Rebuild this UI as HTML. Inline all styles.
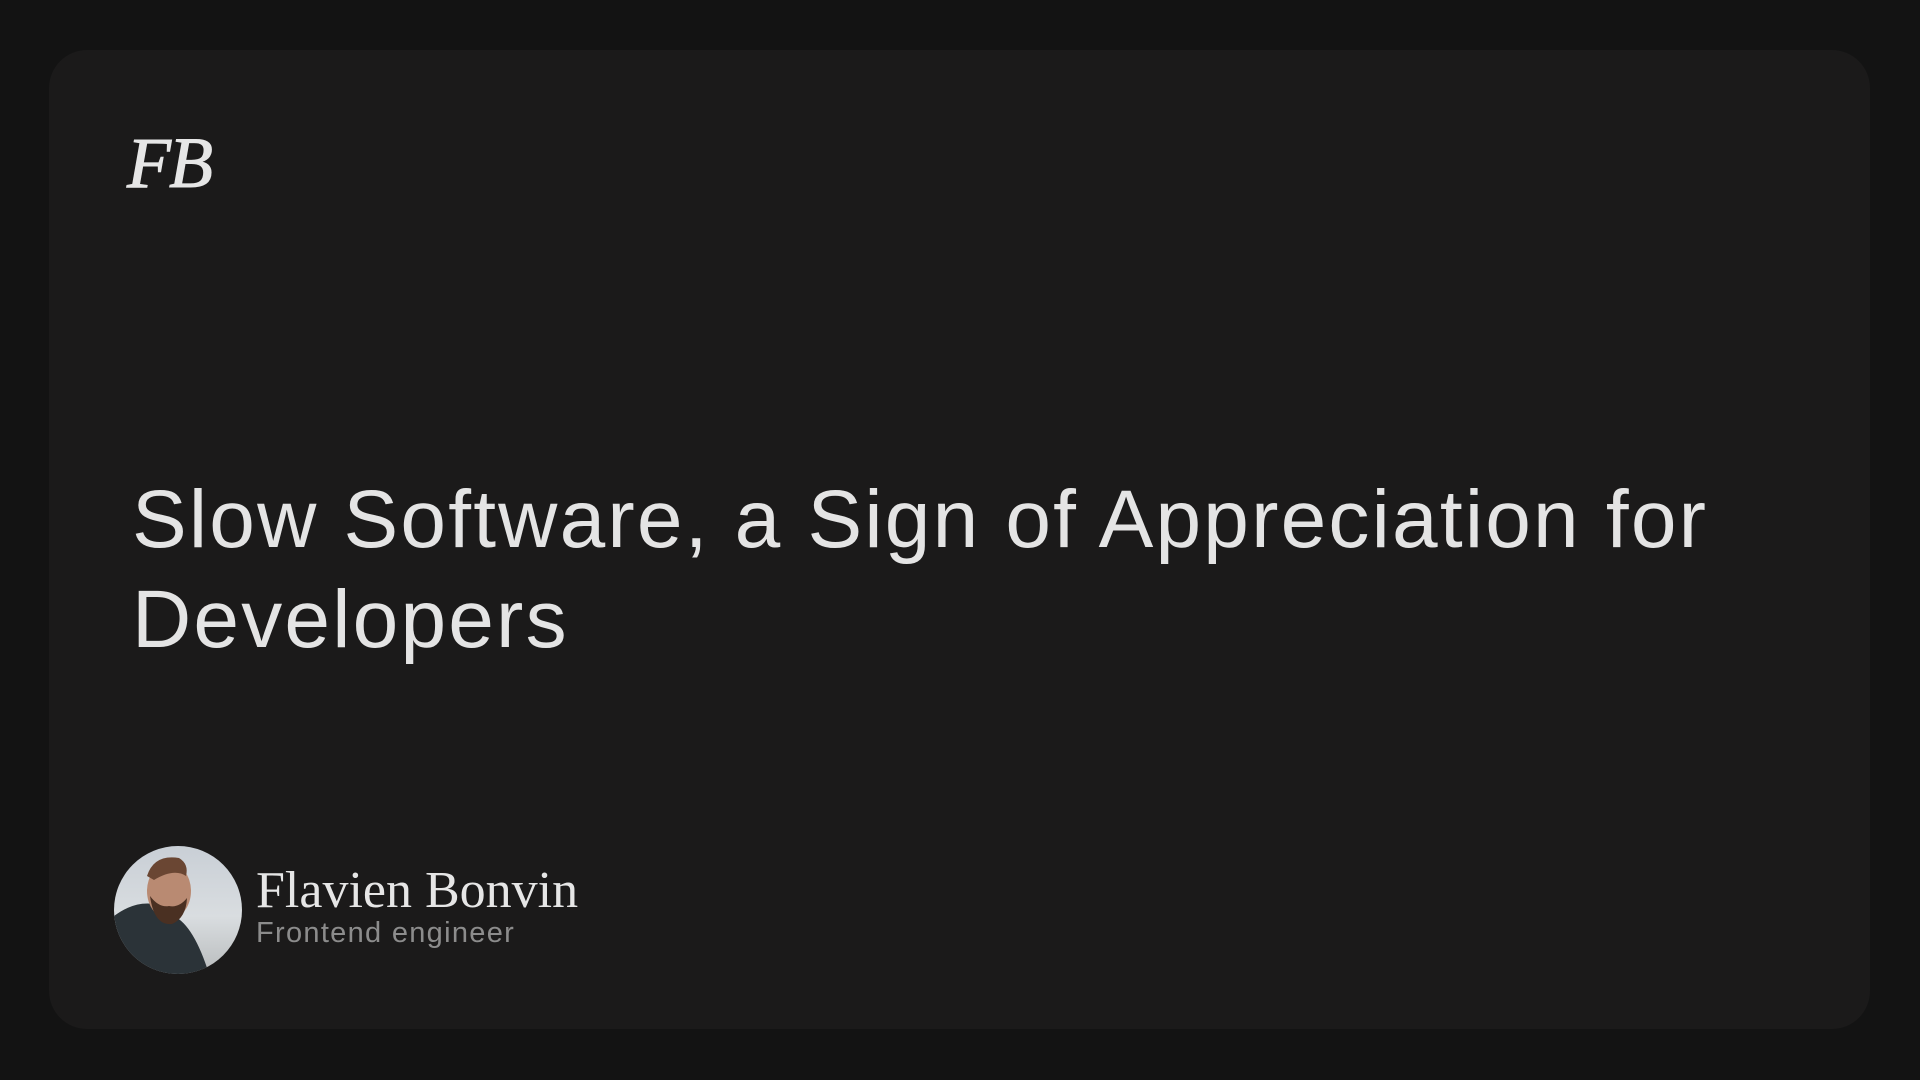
<!DOCTYPE html>
<html><head><meta charset="utf-8"><style>
html,body{margin:0;padding:0;width:1920px;height:1080px;background:#131313;overflow:hidden}
.card{position:absolute;left:49px;top:50px;width:1821px;height:979px;border-radius:38px;background:#1b1a1a}
.fb{position:absolute;left:127px;top:127px;font-family:"Liberation Serif",serif;font-style:italic;font-size:72px;color:#e6e6e6;line-height:1;letter-spacing:-2px;-webkit-text-stroke:1px #e6e6e6}
.title{position:absolute;left:132px;top:470px;width:1780px;font-family:"Liberation Sans",sans-serif;font-size:82px;line-height:100px;color:#e4e4e4;letter-spacing:2.2px}
.av{position:absolute;left:114px;top:846px;width:128px;height:128px;border-radius:50%;overflow:hidden;background:linear-gradient(180deg,#c9cfd6 0%,#d9dde0 55%,#b9bcbd 100%)}
.name{position:absolute;left:256px;top:862px;font-family:"Liberation Serif",serif;font-size:52px;color:#e6e6e6;line-height:1.1}
.sub{position:absolute;left:256px;top:917px;font-family:"Liberation Sans",sans-serif;font-size:29px;color:#8c8c8c;letter-spacing:1.3px}
</style></head><body>
<div class="card"></div>
<div class="fb">FB</div>
<div class="title">Slow Software, a Sign of Appreciation for Developers</div>
<div class="av"><svg width="128" height="128" viewBox="0 0 128 128">
<path d="M0 70 Q20 55 40 58 L60 70 Q80 80 95 128 L0 128Z" fill="#2b3338"/>
<ellipse cx="55" cy="45" rx="22" ry="28" fill="#b98a72"/>
<path d="M33 30 Q40 8 65 12 Q75 18 72 30 Q60 22 40 34Z" fill="#6a4633"/>
<path d="M36 50 Q40 80 58 78 Q72 72 73 52 Q65 62 55 60 Q45 62 36 50Z" fill="#4a3022"/>
</svg></div>
<div class="name">Flavien Bonvin</div>
<div class="sub">Frontend engineer</div>
</body></html>
